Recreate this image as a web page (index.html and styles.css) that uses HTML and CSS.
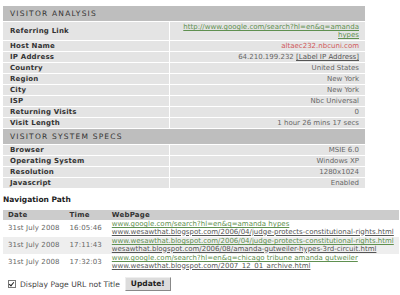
FILE: index.html
```html
<!DOCTYPE html>
<html lang="en">
<head>
  <meta charset="UTF-8">
  <title>Visitor Analysis</title>
  <link rel="stylesheet" href="styles.css">
</head>
<body>
  <table class="stats">
    <tr><th colspan="2" class="section">VISITOR ANALYSIS</th></tr>
    <tr>
      <td class="label">Referring Link</td>
      <td class="value"><a class="green" href="#">http://www.google.com/search?hl=en&amp;q=amanda hypes</a></td>
    </tr>
    <tr><td class="label">Host Name</td><td class="value host">altaec232.nbcuni.com</td></tr>
    <tr><td class="label">IP Address</td><td class="value">64.210.199.232 <a class="plain" href="#">[Label IP Address]</a></td></tr>
    <tr><td class="label">Country</td><td class="value">United States</td></tr>
    <tr><td class="label">Region</td><td class="value">New York</td></tr>
    <tr><td class="label">City</td><td class="value">New York</td></tr>
    <tr><td class="label">ISP</td><td class="value">Nbc Universal</td></tr>
    <tr><td class="label">Returning Visits</td><td class="value">0</td></tr>
    <tr><td class="label">Visit Length</td><td class="value">1 hour 26 mins 17 secs</td></tr>
    <tr><th colspan="2" class="section">VISITOR SYSTEM SPECS</th></tr>
    <tr><td class="label">Browser</td><td class="value">MSIE 6.0</td></tr>
    <tr><td class="label">Operating System</td><td class="value">Windows XP</td></tr>
    <tr><td class="label">Resolution</td><td class="value">1280x1024</td></tr>
    <tr><td class="label">Javascript</td><td class="value">Enabled</td></tr>
  </table>

  <h3 class="nav-title">Navigation Path</h3>
  <table class="nav">
    <tr><th class="c-date">Date</th><th class="c-time">Time</th><th>WebPage</th></tr>
    <tr>
      <td>31st July 2008</td><td>16:05:46</td>
      <td><a class="green" href="#">www.google.com/search?hl=en&amp;q=amanda hypes</a><br><a class="plain" href="#">www.wesawthat.blogspot.com/2006/04/judge-protects-constitutional-rights.html</a></td>
    </tr>
    <tr class="alt">
      <td>31st July 2008</td><td>17:11:43</td>
      <td><a class="green" href="#">www.wesawthat.blogspot.com/2006/04/judge-protects-constitutional-rights.html</a><br><a class="plain" href="#">wesawthat.blogspot.com/2006/08/amanda-gutweiler-hypes-3rd-circuit.html</a></td>
    </tr>
    <tr>
      <td>31st July 2008</td><td>17:32:03</td>
      <td><a class="green" href="#">www.google.com/search?hl=en&amp;q=chicago tribune amanda gutweiler</a><br><a class="plain" href="#">www.wesawthat.blogspot.com/2007_12_01_archive.html</a></td>
    </tr>
  </table>

  <form class="opts">
    <label><input type="checkbox" checked> Display Page URL not Title</label>
    <button type="button">Update!</button>
  </form>
</body>
</html>
```

FILE: styles.css
```css
* {
  box-sizing: border-box;
}

body {
  margin: 0;
  padding: 5px 3px 0 2px;
  background: #fff;
  font-family: "DejaVu Sans", Verdana, sans-serif;
  font-size: 7px;
  color: #666;
}

a {
  text-decoration: underline;
}

.green {
  color: #5f9050;
}

.plain {
  color: #555;
}

/* top stats table */
.stats {
  width: 364px;
  border-collapse: separate;
  border-spacing: 1px;
}

.stats .section {
  background: #bebebe;
  color: #333;
  text-align: left;
  font-weight: normal;
  font-size: 7.5px;
  letter-spacing: 1.2px;
  height: 15px;
  padding: 0 7px;
}

.stats td {
  background: #e4e4e4;
  line-height: 8px;
  padding: 1px 6px 1px 7px;
  height: 10px;
}

.stats .label {
  width: 166px;
  font-weight: bold;
  color: #333;
  letter-spacing: 0.2px;
}

.stats .value {
  text-align: right;
}

.stats .host {
  color: #d05858;
}

/* navigation path */
.nav-title {
  margin: 6px 0 6px 1px;
  font-size: 7.5px;
  color: #222;
}

.nav {
  width: 388px;
  margin-left: 1px;
  border-collapse: collapse;
}

.nav th {
  background: #cccccc;
  color: #333;
  text-align: left;
  height: 10px;
  padding: 0 5px;
  line-height: 8px;
  letter-spacing: 0.2px;
}

.nav .c-date {
  width: 58px;
}

.nav .c-time {
  width: 41px;
}

.nav td {
  line-height: 7.5px;
  padding: 1px 5px;
  height: 16px;
  white-space: nowrap;
  letter-spacing: 0.1px;
}

.nav td:last-child {
  letter-spacing: 0;
}

.nav .alt td {
  background: #eeeeee;
}

/* options */
.opts {
  display: flex;
  align-items: center;
  gap: 5px;
  margin: 6px 0 0 6px;
}

.opts label {
  display: flex;
  align-items: center;
  gap: 4px;
  font-size: 7.6px;
  color: #444;
}

.opts input {
  appearance: none;
  margin: 0;
  width: 8px;
  height: 8px;
  border: 1px solid #777;
  background: #fff;
  position: relative;
}

.opts input:checked::after {
  content: '';
  position: absolute;
  left: 1px;
  top: 0;
  width: 2px;
  height: 4px;
  border: solid #222;
  border-width: 0 1.5px 1.5px 0;
  transform: rotate(40deg);
}

.opts button {
  font-family: "DejaVu Sans", Verdana, sans-serif;
  font-size: 7.5px;
  font-weight: bold;
  color: #222;
  background: #dcdcdc;
  border: 1px solid #999;
  border-color: #eee #888 #888 #eee;
  padding: 2px 5px;
  height: 14px;
  line-height: 8px;
}
```
